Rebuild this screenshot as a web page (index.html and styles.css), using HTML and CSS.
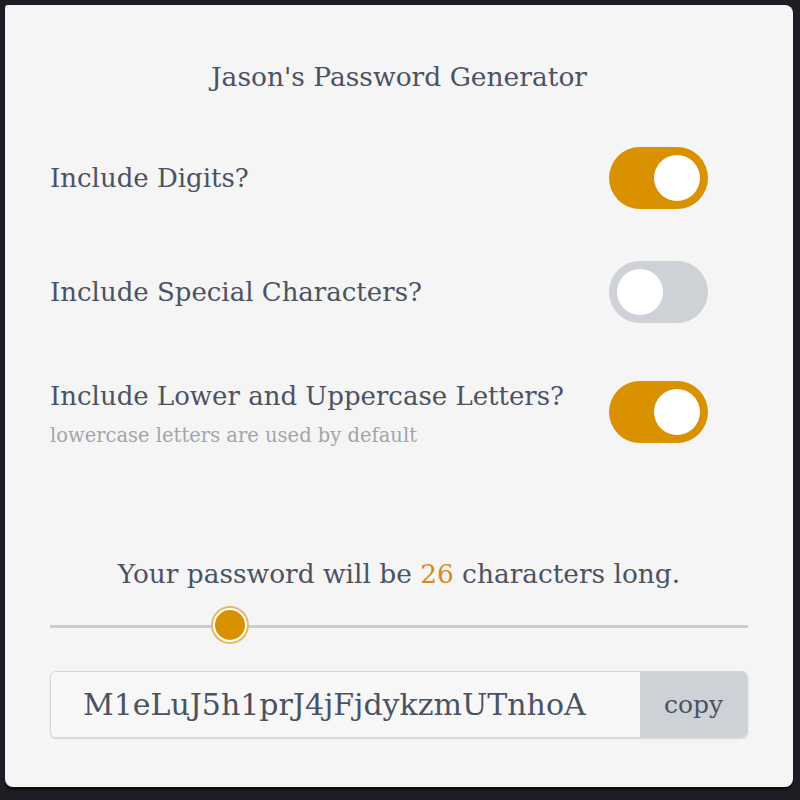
FILE: index.html
```html
<!DOCTYPE html>
<html>
<head>
<meta charset="utf-8">
<link rel="stylesheet" href="styles.css">
</head>
<body>
<div class="card">
  <h1 class="title">Jason's Password Generator</h1>
  <div class="row row-1">
    <div class="label">Include Digits?</div>
    <div class="toggle on"><span class="knob"></span></div>
  </div>
  <div class="row row-2">
    <div class="label">Include Special Characters?</div>
    <div class="toggle"><span class="knob"></span></div>
  </div>
  <div class="row row-3">
    <div class="label-block">
      <div class="label">Include Lower and Uppercase Letters?</div>
      <div class="hint">lowercase letters are used by default</div>
    </div>
    <div class="toggle on"><span class="knob"></span></div>
  </div>
  <div class="length">Your password will be <span class="num">26</span> characters long.</div>
  <div class="slider">
    <div class="track"></div>
    <div class="thumb" style="left: 26.1%"></div>
  </div>
  <div class="output">
    <div class="pw">M1eLuJ5h1prJ4jFjdykzmUTnhoA</div>
    <div class="copy">copy</div>
  </div>
</div>
</body>
</html>
```
FILE: styles.css
```css
html, body {
  margin: 0;
  padding: 0;
  background: #1d1d24;
  height: 800px;
  overflow: hidden;
}
body {
  padding: 5px 7px 0 5px;
  font-family: "DejaVu Serif", "Liberation Serif", serif;
  color: #4b5262;
}
.card {
  height: 782px;
  box-sizing: border-box;
  background: #f5f5f5;
  border-radius: 3px 8px 8px 8px;
  box-shadow: 0 3px 2px rgba(0,0,0,0.5);
  padding: 52px 45px 0 45px;
}
.title {
  margin: 0;
  font-size: 26.5px;
  font-weight: normal;
  line-height: 40px;
  height: 40px;
  text-align: center;
}
.row {
  display: flex;
  justify-content: space-between;
  align-items: center;
}
.row-1 { margin-top: 50px; }
.row-2 { margin-top: 52px; }
.row-3 { margin-top: 57px; align-items: flex-start; }
.row-3 .toggle { margin-top: 1px; }
.label {
  font-size: 26px;
  line-height: 32px;
}
.hint {
  margin-top: 11px;
  font-size: 19.5px;
  line-height: 26px;
  color: #a2a5ab;
}
.toggle {
  width: 99px;
  height: 62px;
  border-radius: 31px;
  background: #ced1d6;
  box-sizing: border-box;
  padding: 8px;
  display: flex;
  justify-content: flex-start;
  margin-right: 40px;
}
.toggle.on {
  background: #da9100;
  justify-content: flex-end;
}
.knob {
  width: 46px;
  height: 46px;
  border-radius: 50%;
  background: #ffffff;
}
.length {
  margin-top: 105px;
  text-align: center;
  font-size: 26.4px;
  line-height: 40px;
}
.num { color: #d98a1e; }
.slider {
  position: relative;
  height: 38px;
  margin-top: 14px;
}
.track {
  position: absolute;
  left: 0;
  right: 0;
  top: 17px;
  height: 3px;
  background: #c9ccd2;
}
.thumb {
  position: absolute;
  top: 0;
  width: 30px;
  height: 30px;
  margin-left: -19px;
  border-radius: 50%;
  background: #da9100;
  border: 2px solid #ffffff;
  box-shadow: 0 0 0 2px #e8b860;
}
.output {
  margin-top: 25px;
  display: flex;
  height: 67px;
  box-sizing: border-box;
  border: 1px solid #d3d5d9;
  border-radius: 6px;
  overflow: hidden;
  box-shadow: 0 1px 2px rgba(0,0,0,0.12);
}
.pw {
  flex: 1;
  padding-left: 32px;
  font-size: 30px;
  line-height: 65px;
  background: #f7f7f7;
}
.copy {
  width: 107px;
  background: #ced1d6;
  text-align: center;
  font-size: 25px;
  line-height: 65px;
}
```
